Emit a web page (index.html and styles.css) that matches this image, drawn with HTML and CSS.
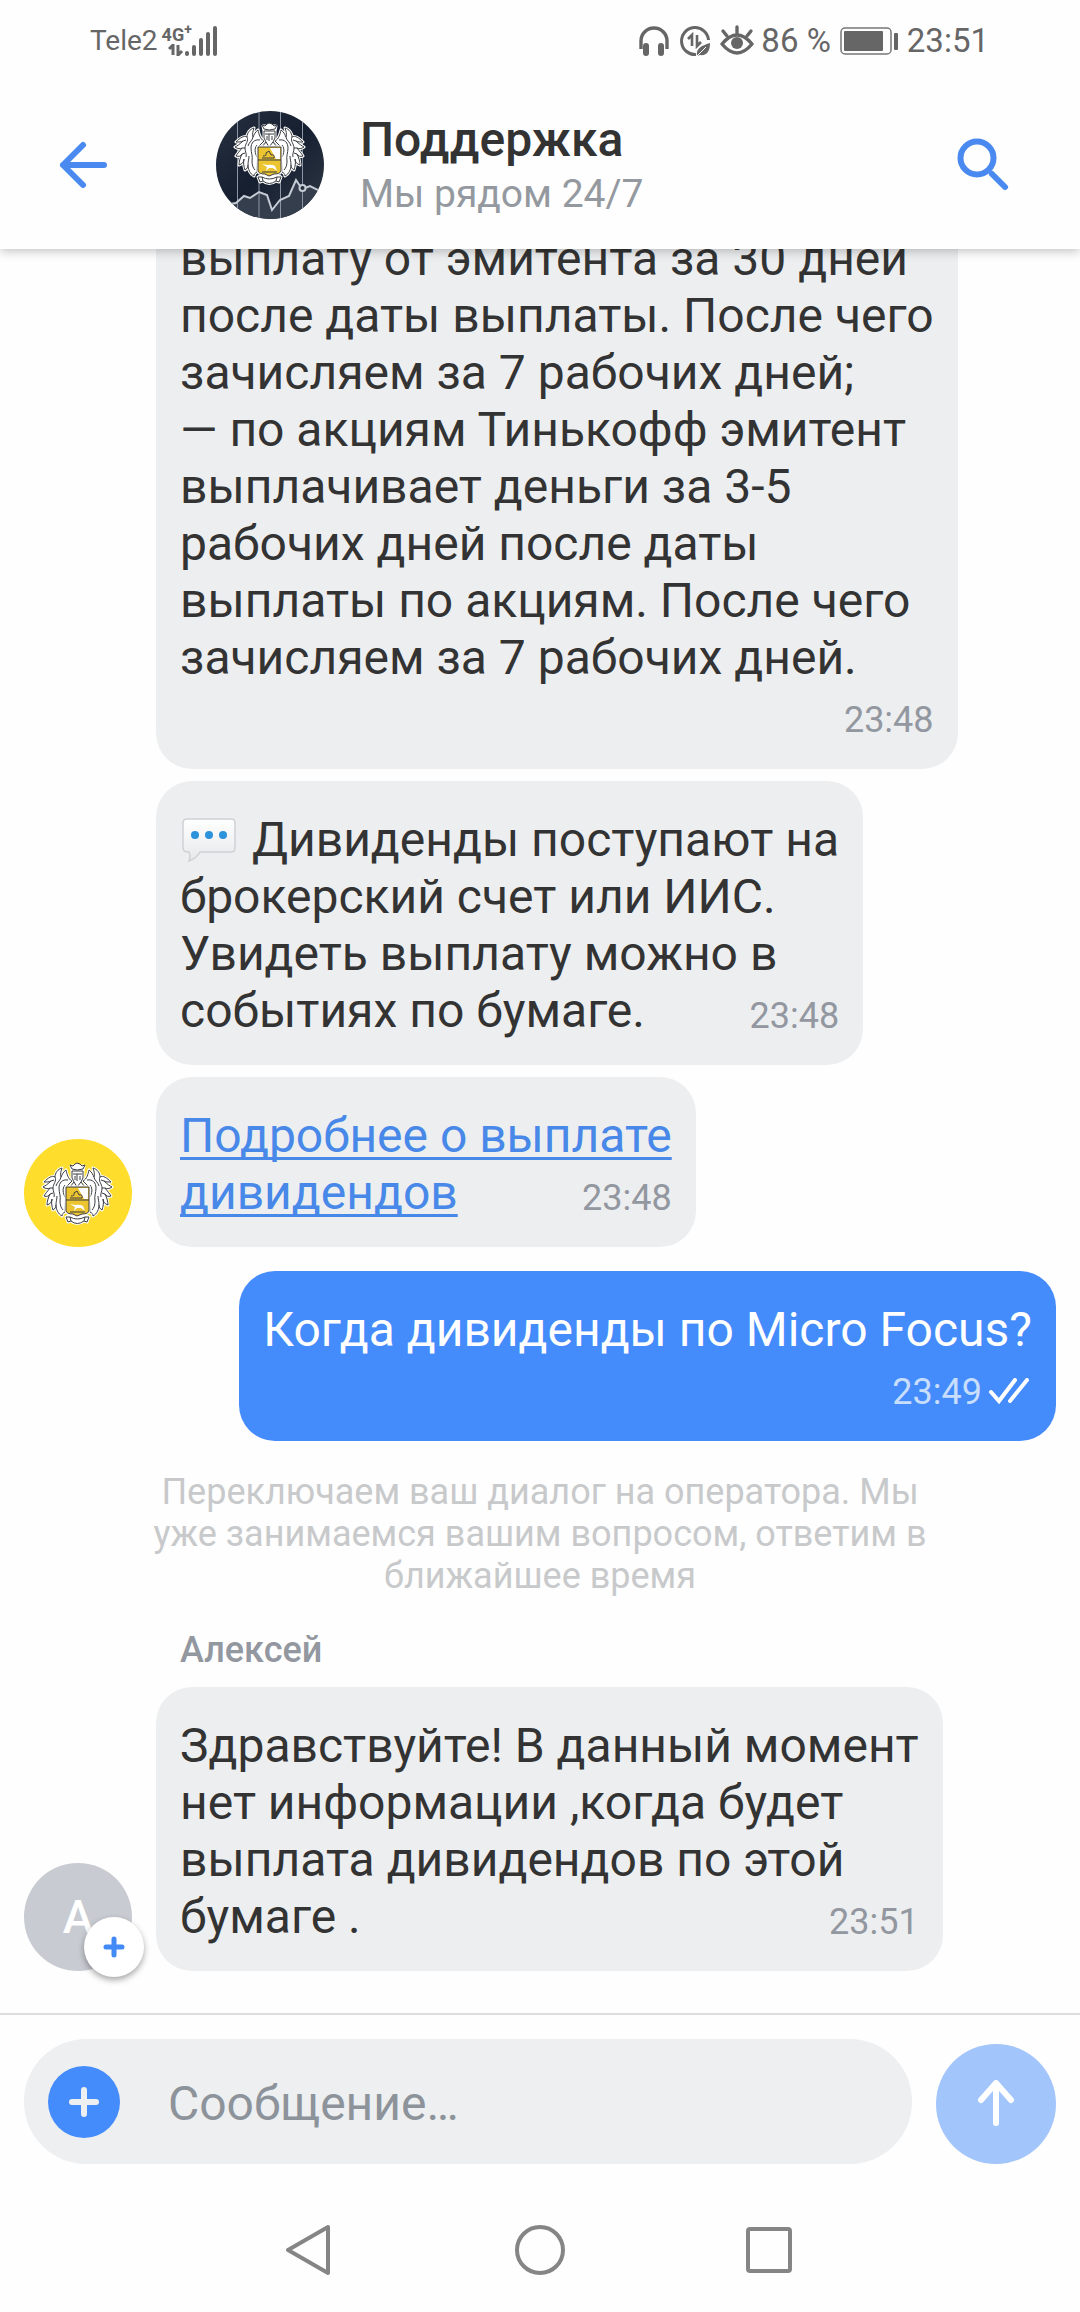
FILE: index.html
```html
<!DOCTYPE html>
<html lang="ru">
<head>
  <meta charset="UTF-8" />
  <meta name="viewport" content="width=device-width, initial-scale=1.0" />
  <title>Поддержка</title>
  <link rel="stylesheet" href="styles.css">
</head>
<body>
  <!-- shared crest, used in both avatars -->
  <svg class="defs" aria-hidden="true">
    <defs>
      <path id="mantle-shape" d="M29 18C25 16 24 11 23 7C20 9 19 12 18 14C17 11 18 8 19 5C15 6 12 10 12 14C9 12 5 15 1 19C4 19 6 19 8 18C5 21 2 23 0 24C3 26 5 26 7 25C4 29 2 31 1 33C4 34 6 33 7 31C5 35 4 39 4 42C7 41 9 39 9 36C8 40 9 44 10 47C12 46 13 44 13 42C13 46 15 51 19 53C19 51 20 50 22 49L23 24Z"/>
      <g id="mantle">
        <use class="halo" href="#mantle-shape"/>
        <use class="leaf" href="#mantle-shape"/>
        <path class="vein" d="M25 17C19 16 16 20 16 25C16 30 18 33 17 38C17 42 18 45 20 47M12 14C14 18 10 21 10 25C10 29 12 31 11 34M18 14C18 17 14 19 13 23M22 22C19 26 20 30 22 34M8 18L11 17M7 25L10 25M7 31L10 30M13 42C13 38 14 36 14 33"/>
      </g>
      <g id="crest">
        <path class="halo" d="M23 54L27 52H42L46 54L44 59L41 58Q34 63 28 58L25 59Z"/>
        <use href="#mantle"/>
        <use href="#mantle" transform="translate(69 0) scale(-1 1)"/>
        <path class="leaf" d="M23 54L27 54Q34 58 42 54L46 54L44 59L41 58Q34 63 28 58L25 59Z"/>
        <path class="vein" d="M27 54L28 58M42 54L41 58"/>
        <path class="halo" d="M29 8L28 3H41L40 8V15L37 19L42 24H27L32 19L29 15Z"/>
        <path class="leaf" d="M29 6L27 2L30 3L32 1L34 0L37 1L39 3L42 2L40 6Q34 8 29 6Z"/>
        <path class="leaf" d="M29 8H40V15L38 19L42 24H27L31 19L29 15Z"/>
        <path class="vein" d="M30 11H39M34 11V18M32 13V17M37 13V17M31 19L34 24L38 19"/>
        <path class="halo" d="M23 24H46V48Q45 51 39 51L34 53L30 51Q24 51 23 48Z"/>
        <path class="shield" d="M23 24H46V48Q45 51 39 51L34 53L30 51Q24 51 23 48Z"/>
        <path class="snow" d="M35 25H45V36H41Z"/>
        <path class="vein" d="M23 37H46M27 35H39Q40 31 36 32L34 28L31 30Q32 33 28 33M27 49H42"/>
        <path class="horse" d="M27 41L32 42Q37 41 40 43L42 48L38 45H34L31 48L32 44Z"/>
      </g>
    </defs>
  </svg>

  <div class="status-bar">
    <div class="status-left">
      <span class="carrier">Tele2</span>
      <span class="network">
        <span class="network-type">4G<sup>+</sup></span>
        <svg width="16" height="12" viewBox="0 0 16 12"><path d="M1 5L5 1V11M10 1V11L14 7" fill="none" stroke="#666" stroke-width="3"/></svg>
      </span>
      <svg width="34" height="32" viewBox="0 0 34 32"><path d="M3 29V28M10 29V22M17 29V15M24 29V9M31 29V3" stroke="#666" stroke-width="4" stroke-linecap="round"/></svg>
    </div>
    <div class="status-right">
      <svg width="32" height="32" viewBox="0 0 32 32"><path d="M3 24V16A13 13 0 0 1 29 16V24" fill="none" stroke="#666" stroke-width="3.4"/><rect x="5" y="18" width="6" height="13" rx="3" fill="#666"/><rect x="20" y="18" width="6" height="13" rx="3" fill="#666"/></svg>
      <svg width="32" height="32" viewBox="0 0 32 32"><path d="M17 29.5A13.5 13.5 0 1 1 29.5 15" fill="none" stroke="#666" stroke-width="3"/><path d="M9 14L13 10V21M18 10V21L22 17" fill="none" stroke="#666" stroke-width="2.6"/><path d="M18 31C17 23 22 21 31 18C31 26 28 31 21 30Z" fill="#666"/><path d="M18 31L27 22" stroke="#fff"/></svg>
      <svg width="34" height="32" viewBox="0 0 34 32"><path d="M2 19Q17 1 32 19Q17 37 2 19Z" fill="none" stroke="#666" stroke-width="3.4" stroke-linejoin="round"/><circle cx="17" cy="18" r="6" fill="#666"/><path d="M17 8V2M7 11L3 6M27 11L31 6" stroke="#666" stroke-width="3.4" stroke-linecap="round"/></svg>
      <span class="percent">86 %</span>
      <svg width="58" height="30" viewBox="0 0 58 30"><rect x="1" y="2" width="50" height="26" rx="4" fill="none" stroke="#777" stroke-width="1.5"/><rect x="4" y="5" width="39" height="20" rx="1" fill="#666"/><rect x="54" y="7" width="4" height="17" rx="1" fill="#666"/></svg>
      <span>23:51</span>
    </div>
  </div>

  <header class="header">
    <button class="icon-button" type="button" aria-label="Назад">
      <svg width="50" height="50" viewBox="0 0 50 50"><path d="M25 5L5 25L25 45M5 25H46" fill="none" stroke="#4a8af0" stroke-width="6" stroke-linecap="round" stroke-linejoin="round"/></svg>
    </button>
    <svg class="header-avatar" width="108" height="108" viewBox="0 0 108 108">
      <defs>
        <linearGradient id="night" x2="1" y2="1"><stop stop-color="#27303f"/><stop offset=".5" stop-color="#151f30"/><stop offset="1" stop-color="#303946"/></linearGradient>
        <clipPath id="round"><circle cx="54" cy="54" r="54"/></clipPath>
      </defs>
      <g clip-path="url(#round)">
        <rect width="108" height="108" fill="url(#night)"/>
        <path d="M14 93L20 91L28 85L34 87L43 81L51 84L56 99L64 89L73 85L80 67L84 75L94 76L108 84V108H14Z" fill="#343e4c"/>
        <path d="M21.5 0V108M43 0V108M64.5 0V108M86.5 0V108" stroke="#8c95a3" stroke-width="1"/>
        <path d="M14 93L20 92L28 85L34 87L43 81L51 84L56 99L64 89L73 85L80 69L84 75M89 77L94 75L108 82" fill="none" stroke="#c6ccd6" stroke-width="2"/>
        <circle cx="86.5" cy="77" r="3" fill="#27303f" stroke="#c6ccd6" stroke-width="2"/>
      </g>
      <use href="#crest" x="19" y="12"/>
    </svg>
    <div class="header-text">
      <h1>Поддержка</h1>
      <p>Мы рядом 24/7</p>
    </div>
    <button class="icon-button" type="button" aria-label="Поиск">
      <svg width="54" height="54" viewBox="0 0 54 54"><circle cx="21" cy="20" r="16.5" fill="none" stroke="#4a8af0" stroke-width="6"/><path d="M36 36L49 49" stroke="#4a8af0" stroke-width="6" stroke-linecap="round"/></svg>
    </button>
  </header>

  <main class="chat">
    <div class="row">
      <div class="bubble stacked">
        <p>выплату от эмитента за 30 дней<br>после даты выплаты. После чего<br>зачисляем за 7 рабочих дней;<br>— по акциям Тинькофф эмитент<br>выплачивает деньги за 3-5<br>рабочих дней после даты<br>выплаты по акциям. После чего<br>зачисляем за 7 рабочих дней.</p>
        <time>23:48</time>
      </div>
    </div>

    <div class="row">
      <div class="bubble">
        <p><svg class="emoji" width="60" height="46" viewBox="0 0 60 46"><defs><linearGradient id="paper" x2="0" y2="1"><stop stop-color="#fff"/><stop offset="1" stop-color="#e6e8ea"/></linearGradient></defs><path d="M7 2H51Q55 2 55 6V31Q55 35 51 35H20Q17 41 9 44Q11 39 9 35Q3 35 3 31V6Q3 2 7 2Z" fill="url(#paper)" stroke="#cfd1d3" stroke-width="1.5"/><g fill="#2c92da"><circle cx="15" cy="18" r="4"/><circle cx="29" cy="18" r="4"/><circle cx="43" cy="18" r="4"/></g></svg> Дивиденды поступают на<br>брокерский счет или ИИС.<br>Увидеть выплату можно в<br>событиях по бумаге.</p>
        <time>23:48</time>
      </div>
    </div>

    <div class="row">
      <svg class="avatar" width="108" height="108" viewBox="0 0 108 108"><circle cx="54" cy="54" r="54" fill="#fedd2c"/><use href="#crest" x="19" y="24"/></svg>
      <div class="bubble">
        <p><a href="#">Подробнее о выплате<br>дивидендов</a></p>
        <time>23:48</time>
      </div>
    </div>

    <div class="row outgoing">
      <div class="bubble stacked">
        <p>Когда дивиденды по Micro Focus?</p>
        <time>23:49 <svg width="44" height="28" viewBox="0 0 44 28"><path d="M3 14L11 23L27 2M22 23L39 2" fill="none" stroke="#fff" stroke-width="4" stroke-linecap="round"/></svg></time>
      </div>
    </div>

    <p class="note">Переключаем ваш диалог на оператора. Мы уже занимаемся вашим вопросом, ответим в ближайшее время</p>

    <p class="author">Алексей</p>
    <div class="row">
      <div class="avatar operator">A
        <button class="badge" type="button" aria-label="Добавить">
          <svg width="24" height="24" viewBox="0 0 24 24"><path d="M12 4V20M4 12H20" stroke="#428af5" stroke-width="5" stroke-linecap="round"/></svg>
        </button>
      </div>
      <div class="bubble">
        <p>Здравствуйте! В данный момент<br>нет информации ,когда будет<br>выплата дивидендов по этой<br>бумаге .</p>
        <time>23:51</time>
      </div>
    </div>
  </main>

  <form class="composer">
    <div class="field">
      <button class="attach" type="button" aria-label="Прикрепить">
        <svg width="36" height="36" viewBox="0 0 36 36"><path d="M18 6V30M6 18H30" stroke="#edeff1" stroke-width="6" stroke-linecap="round"/></svg>
      </button>
      <input type="text" placeholder="Сообщение…" aria-label="Сообщение" />
    </div>
    <button class="send" type="submit" aria-label="Отправить">
      <svg width="48" height="48" viewBox="0 0 48 48"><path d="M24 43V4M9 20L24 3L39 20" fill="none" stroke="#fff" stroke-width="6" stroke-linecap="round" stroke-linejoin="round"/></svg>
    </button>
  </form>

  <nav class="nav">
    <button type="button" aria-label="Назад"><svg width="54" height="54" viewBox="0 0 54 54"><path d="M44 4V50L4 27Z" fill="none" stroke="#858585" stroke-width="4" stroke-linejoin="round"/></svg></button>
    <button type="button" aria-label="Домой"><svg width="54" height="54" viewBox="0 0 54 54"><circle cx="27" cy="27" r="23" fill="none" stroke="#858585" stroke-width="4"/></svg></button>
    <button type="button" aria-label="Недавние"><svg width="54" height="54" viewBox="0 0 54 54"><rect x="6" y="6" width="42" height="42" rx="2" fill="none" stroke="#858585" stroke-width="4"/></svg></button>
  </nav>
</body>
</html>
```
FILE: styles.css
```css
* {
  box-sizing: border-box;
}
body {
  display: flex;
  flex-direction: column;
  height: 100vh;
  margin: 0;
  background-color: #fefefe;
  font-family: Roboto, "Noto Sans", sans-serif;
  color: #333;
}
h1, p {
  margin: 0;
}
button {
  display: flex;
  align-items: center;
  justify-content: center;
  padding: 0;
  border: none;
  background: none;
  cursor: pointer;
}
svg {
  flex-shrink: 0;
}
.defs {
  position: absolute;
  width: 0;
  height: 0;
}

/* crest */
.leaf, .snow, .horse, .halo {
  fill: #fff;
}
.halo {
  stroke: #fff;
  stroke-width: 3;
  stroke-linejoin: round;
}
.leaf, .shield {
  stroke: #3a3c40;
  stroke-width: 1;
  stroke-linejoin: round;
}
.shield {
  fill: #ebc430;
}
.vein {
  fill: none;
  stroke: #3a3c40;
  stroke-width: 1;
}

/* status bar */
.status-bar {
  display: flex;
  justify-content: space-between;
  align-items: center;
  height: 81px;
  padding: 0 91px 0 90px;
  background-color: #fefefe;
  color: #666;
  z-index: 2;
}
.status-left, .status-right {
  display: flex;
  align-items: center;
}
.carrier {
  font-size: 28px;
}
.network {
  display: flex;
  flex-direction: column;
  align-items: flex-end;
  margin: 0 -8px 0 4px;
}
.network svg {
  margin-right: 8px;
}
.network-type {
  font-size: 18px;
  font-weight: 700;
  line-height: 18px;
}
.network-type sup {
  font-size: 14px;
  line-height: 0;
}
.status-right {
  gap: 9px;
  font-size: 33px;
}
.percent {
  margin-left: -2px;
}

/* header */
.header {
  display: flex;
  align-items: center;
  height: 168px;
  flex-shrink: 0;
  padding: 0 70px 0 58px;
  background-color: #fefefe;
  box-shadow: 0 2px 10px rgba(0, 0, 0, 0.25);
  z-index: 1;
}
.header-avatar {
  margin: 0 36px 0 108px;
}
.header-text {
  flex: 1;
}
h1 {
  font-size: 48px;
  font-weight: 500;
  line-height: 57px;
}
.header-text p {
  font-size: 39px;
  line-height: 52px;
  color: #9499a0;
}

/* messages */
.chat {
  display: flex;
  flex: 1;
  flex-direction: column;
  justify-content: flex-end;
  min-height: 0;
  padding: 0 24px 42px;
  overflow: hidden;
}
.row {
  display: flex;
  align-items: flex-end;
  justify-content: flex-start;
  gap: 24px;
  padding-left: 132px;
  margin-bottom: 12px;
}
.row:last-child {
  margin-bottom: 0;
}
.row:has(.avatar) {
  padding-left: 0;
}
.bubble {
  display: grid;
  padding: 30px 24px 26px;
  border-radius: 36px;
  background-color: #edeef0;
  font-size: 48px;
  line-height: 57px;
}
.bubble p, .bubble time {
  grid-area: 1 / 1;
}
.bubble time {
  align-self: end;
  justify-self: end;
  font-size: 36px;
  line-height: 46px;
  color: #9297a0;
}
.bubble.stacked time {
  grid-area: 2 / 1;
  padding-top: 11px;
}
.bubble a {
  color: #4788e8;
  text-decoration-thickness: 3px;
  text-underline-offset: 5px;
  text-decoration-skip-ink: none;
}
.emoji {
  vertical-align: -7px;
}
.row.outgoing {
  justify-content: flex-end;
  margin: 12px 0 30px;
}
.outgoing .bubble {
  background-color: #448bfb;
  color: #fff;
}
.outgoing .bubble time {
  display: flex;
  align-items: center;
  gap: 6px;
  color: #c8defd;
}
.note {
  margin-bottom: 32px;
  padding: 0 120px;
  font-size: 36px;
  line-height: 42px;
  text-align: center;
  color: #c8c9cb;
}
.author {
  margin: 0 0 16px 156px;
  font-size: 36px;
  font-weight: 500;
  line-height: 42px;
  color: #9297a0;
}
.operator {
  display: flex;
  position: relative;
  align-items: center;
  justify-content: center;
  width: 108px;
  height: 108px;
  border-radius: 50%;
  background-color: #c8cbd1;
  font-size: 46px;
  font-weight: 500;
  color: #fff;
}
.badge {
  position: absolute;
  right: -12px;
  bottom: -6px;
  width: 60px;
  height: 60px;
  border-radius: 50%;
  background-color: #fff;
  box-shadow: 0 3px 6px rgba(0, 0, 0, 0.35);
}

/* composer */
.composer {
  display: flex;
  align-items: flex-end;
  gap: 24px;
  padding: 24px;
  border-top: 2px solid #dedede;
}
.field {
  display: flex;
  flex: 1;
  align-items: center;
  gap: 48px;
  height: 125px;
  padding: 0 24px;
  border-radius: 62px;
  background-color: #edeff1;
}
.attach {
  width: 72px;
  height: 72px;
  border-radius: 50%;
  background-color: #448bfb;
}
.field input {
  flex: 1;
  min-width: 0;
  padding: 4px 0 0;
  border: none;
  outline: none;
  background: none;
  font: inherit;
  font-size: 48px;
}
.field input::placeholder {
  color: #8d939a;
}
.send {
  width: 120px;
  height: 120px;
  border-radius: 50%;
  background-color: #a2c5fc;
}

/* system navigation */
.nav {
  display: flex;
  justify-content: center;
  gap: 175px;
  height: 124px;
}
```
